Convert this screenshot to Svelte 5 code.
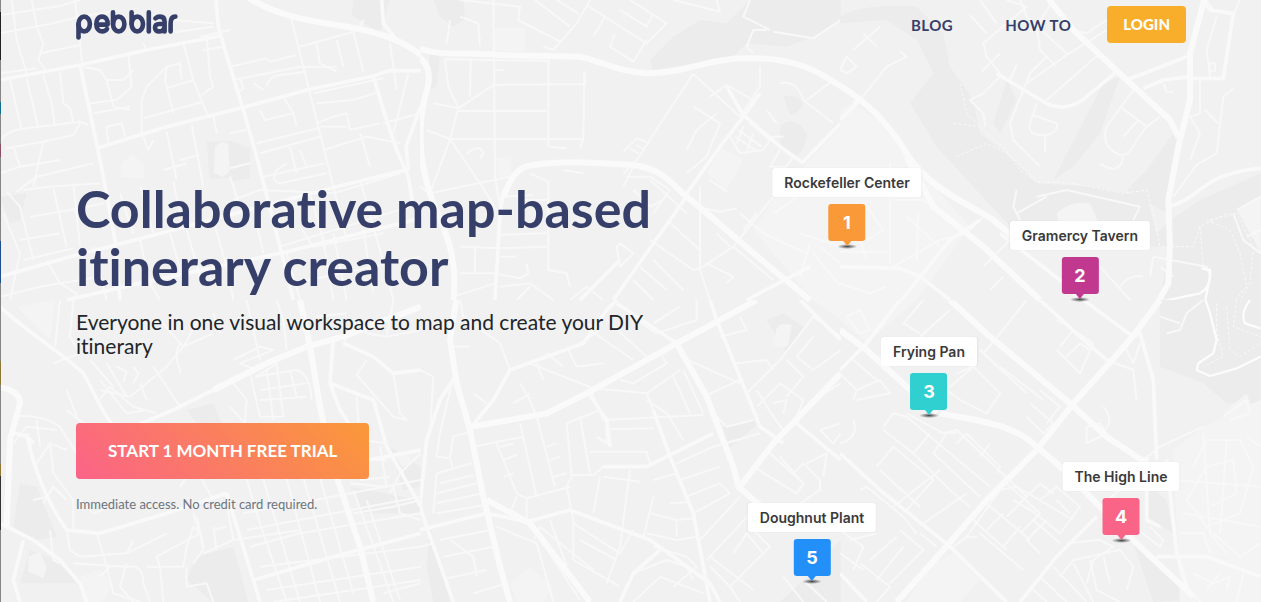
<script lang="ts">
  type Pin = { name: string; color: string; x: number; y: number };

  const pins: Pin[] = [
    { name: 'Rockefeller Center', color: '#fa9938', x: 847, y: 168 },
    { name: 'Gramercy Tavern', color: '#c0398f', x: 1080, y: 221 },
    { name: 'Frying Pan', color: '#30cfd0', x: 929, y: 337 },
    { name: 'The High Line', color: '#fa6587', x: 1121, y: 462 },
    { name: 'Doughnut Plant', color: '#2290f8', x: 812, y: 503 },
  ];

  // Map sections, drawn at three units per pixel. x and y are the section's corner.
  const sections = [
    {
      x: 0,
      y: 0,
      areas: ['M1060 0L1170 0L1140 100L1055 45Z', 'M620 425h70v110h-62z', 'M690 420l60 25v90l-60 10z', 'M0 590L80 580L60 660L30 670Z'],
      light: ['M645 440q20-20 40-8l4 80-20 20-28-14z', 'M365 490l30-25 40 25-5 45-70-5z'],
      highways: ['M740 -10C820 40 900 60 1010 75C1120 92 1200 115 1262 165'],
      major: [
        'M0 240L240 195L440 150L660 108',
        'M240 195L275 360L300 480L345 720L360 900',
        'M290 445L500 380L720 325L920 270L1120 228L1165 212L1262 212',
        'M648 0L655 80L690 200L730 330L770 470L840 740L880 900',
        'M1145 0L1150 70L1190 120',
        'M0 830L210 770L500 695L780 620L1010 560L1225 508L1218 440L1262 320',
        'M1120 228L1150 330L1190 450L1225 530L1240 620',
        'M200 900L420 850L700 790L860 755L1120 690L1262 655',
      ],
      minor: [
        'M0 45L180 18L240 0', 'M35 0L50 120L80 220', 'M0 100L160 70L240 50L330 35', 'M225 0L240 120L246 185', 'M95 0L110 80L130 130L115 180L140 215',
        'M120 160L240 135', 'M0 220L110 205', 'M30 240L65 390', 'M80 235L115 385', 'M130 225L155 310L165 380', 'M180 215L190 310L210 325L220 370',
        'M0 425Q20 390 80 385L240 365L265 375', 'M20 445L130 425L220 405L240 370', 'M60 500L180 480', 'M130 425L100 560', 'M0 520L60 500L40 440', 'M50 575L110 530L280 490',
        'M70 570L150 560L300 550', 'M20 575L60 620L100 780', 'M90 650L240 625L310 610', 'M160 565L200 740', 'M60 720L180 700', 'M70 780L220 745', 'M220 550L240 740', 'M10 640L60 760L30 900',
        'M250 200L300 210L320 240L370 240L400 210', 'M385 165L395 260L350 300L270 310', 'M320 240L340 320L390 330', 'M280 340L390 320', 'M325 430L320 380L365 370L375 410',
        'M425 410L425 300L440 260L500 200L540 190L545 240', 'M500 200L495 240L520 340', 'M500 265L580 240', 'M430 355L610 305', 'M550 130L580 240L625 350', 'M620 110L630 230L640 260L605 285', 'M610 150L670 140',
        'M430 410L445 450L460 420', 'M500 395L530 540', 'M575 375L610 560', 'M540 480L600 465', 'M490 510L560 490', 'M360 580L400 700', 'M430 130L440 150', 'M600 110L690 90', 'M520 60L640 70', 'M500 100L640 80',
        'M420 560L460 700', 'M520 545L540 640', 'M690 400L740 390', 'M640 345L650 400', 'M690 200L800 175L810 185L890 165', 'M700 240L900 200L1010 200', 'M760 250L790 270', 'M710 280L730 265L720 235', 'M800 260Q810 225 840 225L920 215',
        'M870 40L920 240L1000 560L1040 720', 'M940 280L1150 235', 'M900 140L1060 95L1090 215', 'M950 130L960 190L1010 215', 'M1010 120L1030 200', 'M1075 90L1090 60', 'M950 310L1060 300L1140 275', 'M780 330L795 360L880 340L890 380',
        'M880 340L850 290', 'M770 430L955 385', 'M780 460L960 410', 'M950 370L1000 350L1040 340L1050 390L1140 370', 'M970 450L1100 410L1200 430', 'M960 380L1040 380', 'M1080 400L1110 500', 'M790 530L975 490', 'M860 490L830 510Q810 540 840 550L980 520',
        'M870 440L890 520', 'M900 450L920 500', 'M700 600L780 570L1000 580L1200 520', 'M1170 130L1190 270', 'M1225 220L1180 400', 'M1150 370L1262 340', 'M750 490L690 505', 'M690 530L720 620',
        'M510 700L550 840', 'M560 690L600 830', 'M640 660L680 800L700 900', 'M760 630L790 760', 'M930 580L970 720L1000 900', 'M860 760L900 900', 'M900 680L940 740L1150 700', 'M1080 540L1140 750L1180 900', 'M840 740L1262 610', 'M880 850L1262 770',
        'M0 890L120 860L300 830', 'M140 780L180 850L230 880L220 900', 'M280 740L320 900', 'M420 720L450 850L480 900', 'M1000 700L1040 900', 'M1090 690L1120 880',
      ],
    },
    {
      x: 1260,
      y: 0,
      areas: ['M690 180L760 110L840 60L920 70L990 0L1262 0L1262 60L1180 110L1100 140L980 130L940 170L700 210Z', 'M40 0L130 0L135 60L100 80L60 50Z', 'M1080 380Q1120 340 1160 400Q1160 440 1130 470L1080 430Z', 'M1090 290q40-10 60 20q-10 30-40 35z', 'M30 150L60 160L50 260L20 270Z'],
      light: ['M225 85h90v70h-90z', 'M900 440L970 480L920 570L860 520Z', 'M230 470h45v60h-45z', 'M1060 600L1160 490L1262 380V900H1180L1000 690Z'],
      highways: ['M0 145C60 170 130 155 240 165L480 170C560 190 600 215 680 220C800 220 860 175 980 175C1120 170 1200 215 1262 260', 'M250 590C270 540 290 498 340 495C440 480 560 490 640 495C740 510 760 560 800 590C900 670 1020 780 1110 850L1170 900', 'M100 900C115 780 80 700 40 610C0 500 -10 400 15 290C40 220 20 180 -10 170'],
      major: ['M800 580L900 440L970 350L1020 280', 'M800 590L700 730L580 900', 'M920 260L970 345L1080 440L1150 490', 'M1150 485L1262 370', 'M600 780L480 900', 'M1170 800L980 900', 'M225 900L240 640L250 580'],
      minor: [
        'M220 0L222 160L225 530L240 620', 'M75 180L85 260L115 325L220 255L495 252L493 215L490 415L480 445', 'M75 178L390 182', 'M152 180L150 290', 'M385 180L385 440', 'M115 333L380 333', 'M90 417L490 417', 'M20 390L90 417L115 325L40 310', 'M90 417L30 580L0 560', 'M90 417L180 550L230 630', 'M30 580L270 530', 'M225 210h25', 'M140 460q40-30 50 0l-10 15',
        'M390 440L440 445', 'M120 0L300 20L295 60L420 125', 'M345 0L450 80', 'M410 0L475 40', 'M510 0L470 70L400 150L370 140', 'M120 50L175 70L180 140', 'M90 60L80 130', 'M500 15L680 130L740 70L630 0', 'M555 50L520 110', 'M600 30L680 80L700 40', 'M585 100L570 140L640 185L680 120', 'M760 0L900 35L890 0',
        'M990 0L970 50L1050 90', 'M1040 90L1000 90L980 140L1000 160', 'M1060 95L1180 115L1262 60', 'M1020 200L1020 260L960 350', 'M820 220L650 480L610 520', 'M820 222L960 350', 'M870 290L920 255L1000 300', 'M820 320L900 370L860 470L800 520', 'M890 340L830 390L800 450',
        'M610 455L650 415L690 430', 'M630 445l25 15M650 435l25 15', 'M330 520L385 545L385 810L440 820L450 860', 'M240 590L340 585', 'M230 705L380 700', 'M385 600L300 600', 'M120 740L240 745L380 740', 'M120 820L220 820L300 835L325 820L320 790', 'M165 745L165 815', 'M240 770L290 770',
        'M225 850L100 890', 'M240 860L330 850L400 900', 'M330 860L290 900', 'M450 900L500 860L550 900', 'M620 530L690 530L750 570L700 640', 'M640 570L690 620L730 600', 'M690 540L800 640', 'M610 560L640 500', 'M840 560L840 810L870 900', 'M690 720L820 810L850 800L940 740L1060 590', 'M740 660L840 750',
        'M830 620L900 635L950 625', 'M870 540L920 575', 'M860 790L940 830L920 850', 'M940 740L1060 840', 'M890 700L930 740', 'M960 640L1030 700L1160 760', 'M970 690L1010 640', 'M590 740L600 800L640 760L600 730Z', 'M640 840L700 900', 'M700 780L790 870', 'M660 800L740 870', 'M1080 250Q1130 240 1150 300L1240 370', 'M1160 300L1240 240',
        'M1040 330L1070 370', 'M1050 410L1090 410', 'M1080 450L1050 500L1100 500L1120 470', 'M1170 730L1140 830', 'M1180 760L1262 860', 'M1200 740L1262 790', 'M1140 700L1262 740', 'M1200 520L1120 600L1060 640', 'M430 510L490 520', 'M950 370l-20 40 30 50 70-10 20-30-60-50', 'M955 390l70 50M945 410l60 40M970 380l-20 50M1000 400l-20 55',
      ],
    },
    {
      x: 2520,
      y: 0,
      areas: ['M0 50Q60 10 230 20L310 100L330 200L400 300L420 400L500 460L590 550L760 560L920 590L950 700L990 660L1080 600L1262 520V900H960L985 740L780 740L530 700L400 560L290 440L210 310L280 220L230 120L140 60L0 70Z', 'M500 240L530 300L480 400L460 370Z', 'M790 250L840 230L780 400L700 500L640 540Z', 'M1000 400L1010 430L980 640L860 570L920 510Z'],
      light: ['M0 330L40 310L140 380L250 520L390 680L230 900H0Z', 'M1190 630L1262 590V760L1230 700Z', 'M650 640Q690 600 750 610L780 680H660Z'],
      highways: ['M-10 250C70 300 140 360 200 460C260 560 380 610 460 660L530 720', 'M620 -10L700 90L860 240L990 360L1015 410', 'M1095 -10L1050 160L1050 300L1015 440L985 600L990 740L985 850L955 905', 'M200 470L280 620L430 740L600 900'],
      major: ['M985 620C1080 600 1080 520 1262 505', 'M470 220L560 275L620 310Q680 340 740 290L830 215', 'M0 360L60 300L40 310', 'M180 905L330 720L420 660', 'M480 700L660 840L720 900', 'M0 800L180 805L240 830L330 900', 'M860 240L1040 170', 'M1050 235L1150 235L1180 40L1110 30L1090 0', 'M910 265L970 240L1050 230'],
      minor: [
        'M60 300L140 200L200 170L180 155', 'M500 0L560 20L430 130L440 170L480 220', 'M390 45L440 100', 'M420 0L470 70', 'M540 0L560 50L680 160', 'M640 0L590 80L600 150L650 200', 'M480 160L425 215', 'M530 195L510 240', 'M620 170L570 220L510 370L520 420L600 500', 'M590 310L570 370Q560 410 620 405Q660 390 650 370L580 345', 'M615 410L615 455', 'M560 250L680 165L800 90L900 70',
        'M780 160L620 300', 'M480 230L430 280L390 300L430 340L435 380', 'M840 320L920 380L960 350', 'M880 270L800 380Q780 440 840 465Q870 470 890 420L920 380', 'M895 360L850 410', 'M780 490Q840 530 850 470', 'M740 130L820 210', 'M700 90L740 100L800 60', 'M1100 0L1120 30L1180 45L1200 0', 'M1130 50L1100 150L1110 230', 'M1110 190h15v22h-18z',
        'M1080 240L1080 340L1050 350L1080 400L1050 480', 'M1180 265L1150 290L1130 460L1070 495L1000 590', 'M1095 330L1135 370', 'M970 250L980 275L1000 275', 'M1190 630L1262 590', 'M1180 640L1210 720L1262 760', 'M1220 710L1262 690', 'M150 490L150 790', 'M235 640L230 780', 'M0 755L150 755', 'M160 600L250 600L280 620', 'M160 800L300 720L380 700L440 640L500 700', 'M200 650L300 740',
        'M620 590L530 640', 'M530 570L520 620L540 660', 'M590 590L680 570L900 620L880 660', 'M780 800L870 900', 'M840 860Q870 820 910 830', 'M450 870L490 830', 'M530 700L430 800', 'M940 770L1100 800L1110 830', 'M940 770L930 830', 'M1000 830L960 800', 'M0 210L20 170L50 200L20 220Z', 'M40 150L120 80', 'M70 100L110 140', 'M80 620L130 690L80 720', 'M0 850L90 880L140 860', 'M0 700L60 720L80 780',
      ],
      shore: ['M1085 805L1110 810Q1115 860 1080 880L960 905', 'M1110 830L1095 905'],
      paths: ['M360 250L380 340L440 400L490 440L540 510L590 545L700 550L850 580L920 570L940 640L960 740L1060 740L1080 680L1160 640', 'M350 470L440 430L500 460L590 540', 'M1100 660L1170 690L1200 760L1220 860L1180 905', 'M340 370L420 380', 'M1110 660L1190 640L1240 740L1230 850L1200 905', 'M1080 680L1090 800'],
    },
    {
      x: 0,
      y: 900,
      areas: ['M560 330L640 310L670 380L590 370Z', 'M590 770L700 740L745 906H640L560 840Z', 'M60 550L110 560L170 710L100 720L40 680Z', 'M1170 440L1262 500V560L1210 570Z', 'M60 850L90 750L170 780L230 850Z', 'M1050 560L1262 600V640L1090 640Z'],
      light: ['M85 770l35-15 20 50-10 30-45-20z', 'M240 830L300 810L340 850L310 906H250Z', 'M1180 460l40-5 15 35-30 10z', 'M50 20L165 0L150 120Z'],
      highways: ['M640 270L800 190L920 140L1030 110L1262 20', 'M900 0L930 140L960 320L1000 500L1080 740L1120 906', 'M-10 260Q60 270 60 310L30 420L20 680'],
      major: ['M0 20C60 80 200 170 250 220C280 270 290 310 340 380', 'M400 380L520 330L640 270', 'M0 670L100 720L180 780L240 850L260 906', 'M80 400Q110 560 200 690L300 700L500 640L680 580', 'M30 400Q80 400 100 430', 'M70 720L40 840L60 906', 'M760 840L1000 770L1262 700', 'M1000 500L1262 450', 'M680 580L760 840L780 906', 'M1030 130L1120 170L1180 220L1262 210', 'M990 250L1120 300L1160 440L1262 620', 'M1000 110L990 250L1020 330L1080 420'],
      minor: [
        'M180 0L165 140', 'M220 0L210 110L240 160', 'M40 350Q120 340 180 380L230 460', 'M40 430L80 380L170 390', 'M110 490L150 430L200 450', 'M150 430L160 520L220 600L220 690', 'M130 610L160 560L200 600', 'M240 600L280 640L330 620', 'M100 600L140 590', 'M120 440L110 360', 'M230 350L200 270', 'M250 370L200 330', 'M290 310L330 260L400 320L470 340', 'M300 270L390 290L500 200L550 140L640 100', 'M270 180L340 260', 'M320 190L380 290', 'M460 200L540 320', 'M240 160L160 190', 'M300 240L380 340L440 330',
        'M540 130Q520 160 540 210L540 220', 'M480 60L550 140L600 50', 'M640 40L660 100', 'M420 250L440 300', 'M200 690L210 750L240 770L380 760L500 700', 'M290 700L320 800L340 880L420 906', 'M220 790L380 800Q430 790 430 850L450 906', 'M330 800L300 830', 'M380 760L400 720', 'M380 790L360 860L400 906', 'M480 800L490 906', 'M440 800L550 800L560 740L580 680L600 700L610 750L580 790', 'M480 800L470 770L600 700L580 640', 'M560 800L560 860L620 850L640 906',
        'M610 760L700 720', 'M640 680L650 750', 'M640 690L680 680', 'M590 650L610 740', 'M150 690L160 780L180 790', 'M700 400L770 640L860 906', 'M770 470L820 640L900 906', 'M850 500L960 906', 'M900 500L1020 906', 'M730 640L1262 540', 'M740 690L1262 590', 'M750 740L900 700L1262 640', 'M780 800L1262 740', 'M800 870L1262 800', 'M820 906L1262 840', 'M680 610L700 720L900 690', 'M950 500L1060 880',
        'M1060 570L1180 906', 'M1100 600L1200 900', 'M1180 560L1200 640L1262 660', 'M1060 640L1180 620L1262 600', 'M1080 540L1170 530', 'M1060 480L1160 480', 'M1070 290L1080 420L1160 430', 'M1180 220L1200 340L1220 360L1180 350L1070 225L1100 180', 'M1030 130L1070 60L1100 100L1160 110L1262 90', 'M1160 110L1180 0', 'M750 220L780 350L850 350L830 190L770 230', 'M765 230L890 210Q930 220 935 300', 'M800 210L820 360', 'M780 270L920 250', 'M780 300L920 290', 'M870 210L890 290',
        'M700 250L740 300L735 370L690 320', 'M700 180L780 140L820 150L720 190L770 210', 'M860 150L850 60L830 0', 'M740 0L760 90L900 60', 'M760 90L780 180', 'M950 50L1040 40', 'M350 200l30 15-10 30M400 200l15 20-15 30', 'M560 530L540 560M590 510L640 600', 'M1150 880L1262 850', 'M1140 440L1160 560L1050 550', 'M1262 460L1200 520L1170 580',
      ],
    },
    {
      x: 1260,
      y: 900,
      areas: ['M910 380L1000 360L1010 375L920 450Z', 'M1040 60L1090 40L1150 80L1100 160Z', 'M30 680L90 906H40L20 800Z', 'M1080 906L1160 830L1262 720V906Z'],
      light: ['M1070 85q10-20 45-10l-10 60q-20 15-45 0z', 'M270 850L330 800L400 860L370 906H290Z', 'M1180 0H1262V60Z'],
      highways: ['M110 -10L90 120L110 250L150 390L190 590L240 800L270 906', 'M155 380L380 340L500 280L770 130L1010 0', 'M770 130L860 290L940 500L955 560L1060 650', 'M960 560L1060 430L1262 220', 'M200 600L330 670L460 840L510 906'],
      major: ['M155 380L220 300L270 210L490 130L560 30L590 0', 'M590 10L770 130', 'M0 690L200 640L320 665L450 630L690 720L870 850L900 906', 'M600 906L640 820L720 750', 'M105 230L60 300L20 420L0 620L20 680L100 906', 'M870 0L890 60L980 280L1020 380L1090 430', 'M510 285L560 360L570 440', 'M700 330L750 470L820 640L870 906', 'M1140 0L1262 120', 'M1130 370L1262 480', 'M550 500L680 500L880 400'],
      minor: [
        'M330 190L520 265L680 280L780 210', 'M510 265L550 360L850 345', 'M570 388L700 385', 'M510 455L680 455L690 490', 'M455 525L520 525L550 500', 'M440 370L455 530L440 560L460 660L460 780', 'M440 370L540 330', 'M480 350L510 520', 'M300 370L350 590', 'M350 350L405 560', 'M160 440L310 410', 'M230 430L290 580L320 595L450 560', 'M290 590L270 640', 'M320 600L320 660', 'M100 230L60 400L50 470L90 475L100 410L150 395', 'M50 520L155 490', 'M50 520L40 640', 'M50 580L170 550', 'M60 550L160 525', 'M50 610L190 580', 'M50 640L195 615',
        'M60 720L210 690', 'M70 770L220 740', 'M80 835L200 810', 'M90 720L160 770L170 830', 'M230 680L350 730L400 906', 'M340 720L360 680L520 810', 'M330 670L480 900', 'M390 660L440 800', 'M460 670L600 760L640 690', 'M480 720L590 780', 'M460 780L600 860', 'M540 530L520 640', 'M550 530L660 545', 'M630 510L600 740L560 850', 'M700 590L670 710', 'M690 640L770 660L820 655', 'M680 700L770 720L830 710', 'M770 660L770 710', 'M750 610L810 605', 'M700 540L770 520', 'M560 350L560 430L530 410', 'M680 280L700 330',
        'M680 300L740 340L790 420', 'M760 230L810 340', 'M790 210L850 340', 'M780 170L960 250', 'M600 240L640 250L740 190L720 160', 'M510 90L640 180', 'M560 60L680 170', 'M650 60L710 100L830 60L830 0', 'M700 70L780 20', 'M820 210L870 310', 'M850 290L960 240L980 280', 'M890 350L920 380L1000 360', 'M770 490L880 440L1020 400', 'M780 540L900 500', 'M800 590L900 550L930 580', 'M820 640L930 580', 'M840 720L960 590', 'M860 780L1010 620', 'M870 800L930 860L1050 740L990 680', 'M930 860L960 906', 'M870 770L1000 870', 'M940 760L980 700L1030 760',
        'M1010 270L1060 350L1090 390', 'M1010 320L1080 250L1150 300L1130 350', 'M1060 310L1100 300L1090 340', 'M980 280L1080 180L1180 50L1262 110', 'M950 190L1040 180L1060 210', 'M900 110L980 90L960 50', 'M1100 180L1150 230L1100 290', 'M1180 110L1130 170L1180 210L1262 150', 'M1262 250L1180 300', 'M1000 500L1130 580L1150 550L1050 460', 'M1120 520L1150 490L1200 540L1200 570L1140 610', 'M1080 470L1150 550', 'M1160 490L1220 460L1210 530', 'M1200 390L1262 370M1200 390L1240 430L1262 400', 'M1090 830L1150 906', 'M1150 840L1220 906', 'M640 820L740 780L800 800L820 840', 'M700 740L800 770L830 800L760 860', 'M640 906L720 830L850 880', 'M300 250L330 300L350 350', 'M280 310L330 280', 'M160 280L200 310', 'M380 160L430 200', 'M440 140L470 200L550 190', 'M480 130L540 90L500 70', 'M370 240L350 190', 'M0 210L40 230L30 400', 'M0 740L40 730', 'M90 475L100 510', 'M120 0L130 50L240 130L270 210', 'M90 140L150 140', 'M160 880L260 850', 'M240 440l40-10M250 480l40-15M250 530l30-10M380 440l30-10M390 480l30-10M400 530l40-10',
      ],
    },
    {
      x: 2520,
      y: 900,
      areas: ['M960 0H1262V310L1160 310L1090 250L960 200Z', 'M880 730L1060 900L940 906Z', 'M930 560L980 600L1000 700L920 650Z'],
      light: ['M1000 450L1090 380L1262 300V906H1020Z', 'M260 800L340 760L420 840L360 906H200Z', 'M1150 340L1220 280L1262 400H1170Z', 'M0 0H230L80 130L0 60Z'],
      highways: ['M0 90L80 150L200 260L290 340', 'M330 0L450 110L690 310L800 410L920 490', 'M300 340C400 360 520 370 590 440L650 490L770 610L900 740L1060 890', 'M960 0L870 120L700 310L590 450L440 600L310 750L170 906'],
      major: ['M0 460L120 570L330 740L500 906', 'M180 0L80 130L0 210', 'M600 0L720 110L800 180', 'M730 0L880 110L900 100L940 240L950 480', 'M540 906L650 770L770 650', 'M0 820L80 906', 'M950 770L1100 770L1262 830', 'M980 480L1010 760L1040 860', 'M920 470L920 660L960 680'],
      minor: [
        'M130 380L160 340L200 350L450 560', 'M130 390L220 460L330 570L390 620', 'M110 500L160 440L280 540L200 630', 'M120 510L240 620L150 540', 'M350 400L320 400L280 460L420 590', 'M350 430L380 400L480 500L470 520', 'M60 570L80 560L190 650L230 700', 'M200 340L310 400L350 390L560 590L500 650', 'M160 620L300 510', 'M250 670L380 580', 'M220 460L270 400', 'M420 470L450 430', 'M290 740L240 700', 'M0 690L70 740L40 810', 'M30 720L110 700', 'M60 790L150 860L110 906', 'M70 810L0 760', 'M150 850L250 750L180 690', 'M90 780L170 710', 'M110 840L190 740',
        'M500 550L600 640L540 700', 'M440 610L570 720', 'M400 660L500 750', 'M380 710L480 570L530 560L700 660', 'M420 700L550 810', 'M340 740L380 710L410 710', 'M600 600L650 560L720 620L660 700L560 620', 'M580 660L660 730', 'M490 640L440 690', 'M540 680L490 740', 'M600 760L560 720L620 660', 'M650 600L690 640', 'M640 580L600 550L560 590', 'M520 600L570 630', 'M680 730L780 720L820 740L760 780L740 850', 'M660 830L700 780L840 750L880 800L860 870', 'M750 780L770 870L840 906', 'M790 770L810 850', 'M700 790L760 906', 'M600 830L680 906', 'M570 860L620 906', 'M640 800L740 906', 'M780 620L850 560L920 480',
        'M930 680L970 720L960 740L870 670', 'M740 380L740 430L800 400L780 370Z', 'M790 320Q830 370 780 400', 'M560 350L610 400L640 370L570 310', 'M600 270L660 320L620 370', 'M480 200L610 300', 'M350 220L400 200L480 280L440 340L360 300L320 270', 'M420 150L560 280', 'M430 160L480 100L560 0', 'M240 110L330 30', 'M240 100L190 70L250 0', 'M330 260L400 200', 'M660 140L700 90L760 130L720 220L650 150', 'M680 170L720 130L750 150', 'M690 80L650 60', 'M800 180L880 210L890 300', 'M850 130L880 190L900 130', 'M980 100L1020 90L1040 40L1090 0', 'M960 50L1020 70',
        'M40 300L50 270L120 240L150 280L50 300', 'M0 220L50 270', 'M40 180L110 240', 'M20 50L60 30L90 90L60 100Z', 'M0 430Q60 410 40 360', 'M910 480L960 440L1090 380', 'M1150 350L1220 300L1230 340L1170 360', 'M1060 820L1120 850L1170 830L1160 870', 'M1100 870L1140 820', 'M1190 906L1210 820', 'M1040 860L1080 906', 'M1060 500L1100 420L1200 420L1240 500L1200 640L1100 680L1040 600L1100 500L1180 480L1190 580L1110 620', 'M1000 540L1262 560', 'M1090 400L1110 700L1160 760', 'M1030 640L1262 680', 'M1160 420L1140 700', 'M1020 700h70l20 60M1120 700l80 70 62-40', 'M1220 410L1262 440',
      ],
      paths: ['M1130 10L1130 100L1150 170L1110 190L1090 200', 'M1160 20L1170 150L1200 170L1262 130', 'M1190 0L1180 80L1262 110'],
      shore: ['M1095 -5L1110 40L1130 120L1120 160L1075 190L1070 210L1110 228L1190 205L1262 170', 'M1230 0Q1200 40 1215 70L1262 85'],
    },
  ];
</script>

<div class="page">
  <svg class="map" viewBox="0 0 3783 1806" preserveAspectRatio="xMidYMid slice" aria-hidden="true">
    {#each sections as section}
      <svg x={section.x} y={section.y} width="1263" height="906">
        {#each section.areas as d}<path class="area" {d} />{/each}
        {#each section.light as d}<path class="area light" {d} />{/each}
        {#each section.minor as d}<path class="road" {d} />{/each}
        {#each section.major as d}<path class="road major" {d} />{/each}
        {#each section.highways as d}<path class="road highway" {d} />{/each}
        {#each section.shore ?? [] as d}<path class="road shore" {d} />{/each}
        {#each section.paths ?? [] as d}<path class="road trail" {d} />{/each}
      </svg>
    {/each}
  </svg>

  <header class="navbar">
    <a class="logo" href="/" aria-label="pebblar">
      <svg viewBox="0 0 102 31" width="102" height="31" aria-hidden="true">
        <path d="M2.5 27.5V14" />
        <ellipse cx="8.2" cy="14" rx="5.7" ry="7.4" />
        <path d="M20.5 14.6H31.6C32 9.5 29.6 6.6 26 6.6S20.3 9.6 20.3 14S22.6 21.4 26 21.4Q29.4 21.4 31 19" />
        <path d="M37 2.4V14" />
        <ellipse cx="42.7" cy="14" rx="5.7" ry="7.4" />
        <path d="M55.6 2.4V14" />
        <ellipse cx="61.3" cy="14" rx="5.7" ry="7.4" />
        <path d="M72.8 2.4V21.4" />
        <path d="M79.4 8.4Q81.2 6.6 84 6.6Q88.6 6.6 88.6 11.4V21.4M88.6 14H83.4Q79 14 79 17.7T83.2 21.4Q88.6 21.4 88.6 16" />
        <path d="M94.6 21.4V13.4Q94.6 6.6 99.4 6.6" />
      </svg>
    </a>
    <nav>
      <a class="nav-link" href="/blog">BLOG</a>
      <a class="nav-link" href="/how-to">HOW TO</a>
      <a class="login" href="/login">LOGIN</a>
    </nav>
  </header>

  <main class="hero">
    <h1>Collaborative map-based itinerary creator</h1>
    <p class="lead">Everyone in one visual workspace to map and create your DIY itinerary</p>
    <button class="cta" type="button">START 1 MONTH FREE TRIAL</button>
    <p class="note">Immediate access. No credit card required.</p>
  </main>

  {#each pins as pin, i}
    <div class="pin" style="left: {(pin.x / 1261) * 100}%; top: {(pin.y / 602) * 100}%; --pin-color: {pin.color}">
      <span class="pin-label">{pin.name}</span>
      <span class="pin-marker">{i + 1}</span>
    </div>
  {/each}
</div>

<style>
  :global(body) {
    margin: 0;
  }

  .page {
    position: relative;
    box-sizing: border-box;
    min-height: 100vh;
    overflow: hidden;
    background: #f1f1f1;
    font-family: Lato, 'Open Sans', sans-serif;
    font-variant-ligatures: none;
    color: #212529;
  }

  .page::before {
    content: '';
    position: absolute;
    inset: 0 auto 0 0;
    z-index: 1;
    width: 1px;
    background: linear-gradient(
      #858585 2%, #222 2% 10%, #858585 10% 17%, #0f6f8c 17% 19%, #858585 19% 24%, #8c5064 24% 26%, #858585 26% 40%,
      #1d4f91 40% 47%, #858585 47% 60%, #8f7836 60% 64%, #858585 64% 77%, #8f7836 77% 79%, #333 79% 88%, #858585 88%
    );
  }

  .map {
    position: absolute;
    inset: 0;
    width: 100%;
    height: 100%;
  }

  .area {
    fill: #ececec;
  }

  .light {
    fill: #f4f4f4;
  }

  .road {
    fill: none;
    stroke: #f8f8f8;
    stroke-width: 6;
    stroke-linejoin: round;
  }

  .major {
    stroke: #f9f9f9;
    stroke-width: 11;
  }

  .highway {
    stroke: #fafafa;
    stroke-width: 18;
  }

  .shore {
    stroke: #fcfcfc;
    stroke-width: 7;
  }

  .trail {
    stroke: #f9f9f9;
    stroke-width: 3;
    stroke-dasharray: 9 6;
  }

  .navbar {
    position: relative;
    display: flex;
    justify-content: space-between;
    align-items: flex-start;
    padding: 6px 75px 0 76px;
  }

  .logo {
    display: block;
    margin-top: 4px;
  }

  .logo svg {
    display: block;
    fill: none;
    stroke: #363f69;
    stroke-width: 4.6;
    stroke-linecap: round;
    stroke-linejoin: round;
  }

  nav {
    display: flex;
    align-items: center;
  }

  .nav-link {
    margin-right: 52px;
    font-size: 15px;
    line-height: 20px;
    font-weight: 700;
    letter-spacing: 0.5px;
    color: #363f69;
    text-decoration: none;
  }

  .nav-link + .nav-link {
    margin-right: 36px;
  }

  .login {
    padding: 8px 16px;
    border-radius: 4px;
    background: #f9ae2b;
    color: #fff;
    font-size: 15px;
    line-height: 21px;
    font-weight: 900;
    text-decoration: none;
  }

  .hero {
    position: relative;
    max-width: 600px;
    padding: 136px 76px 80px;
  }

  h1 {
    margin: 0;
    font-size: 52px;
    line-height: 58px;
    font-weight: 700;
    color: #363f69;
  }

  .lead {
    margin: 15px 0 0;
    font-size: 21px;
    line-height: 24px;
  }

  .cta {
    display: block;
    margin: 65px 0 0;
    padding: 16px 32px;
    border: 0;
    border-radius: 4px;
    background: linear-gradient(45deg, #fb6388, #fa9938);
    color: #fff;
    font-family: inherit;
    font-size: 17px;
    line-height: 24px;
    font-weight: 700;
    cursor: pointer;
  }

  .note {
    margin: 16px 0 0;
    font-size: 13px;
    line-height: 18px;
    color: #6c757d;
  }

  .pin {
    position: absolute;
    display: flex;
    flex-direction: column;
    align-items: center;
    gap: 7px;
    transform: translateX(-50%);
    font-family: Inter, sans-serif;
  }

  .pin-label {
    padding: 0 12px;
    border-radius: 3px;
    background: #fff;
    box-shadow: 0 0 2px rgba(0, 0, 0, 0.06);
    color: #3a3a3a;
    font-size: 14px;
    line-height: 29px;
    font-weight: 600;
    white-space: nowrap;
  }

  .pin-marker {
    position: relative;
    width: 37px;
    border-radius: 3px;
    background: var(--pin-color);
    color: #fff;
    font-size: 18px;
    line-height: 37px;
    font-weight: 700;
    text-align: center;
  }

  .pin-marker::before {
    content: '';
    position: absolute;
    top: 40px;
    left: 50%;
    width: 20px;
    height: 5px;
    border-radius: 50%;
    background: radial-gradient(closest-side, #444, transparent);
    transform: translateX(-50%);
  }

  .pin-marker::after {
    content: '';
    position: absolute;
    top: 100%;
    left: 50%;
    border: 4px solid transparent;
    border-top: 5px solid var(--pin-color);
    border-bottom: 0;
    transform: translateX(-50%);
  }
</style>
